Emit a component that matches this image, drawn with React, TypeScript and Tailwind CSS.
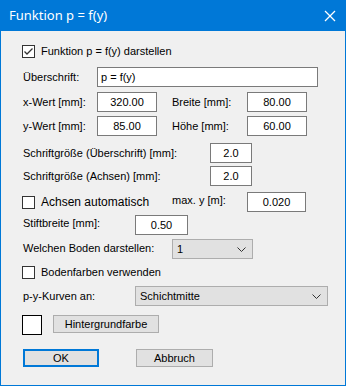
import React from 'react'

const font = { fontFamily: '"Liberation Sans", Arial, sans-serif' }

const Box: React.FC<{ checked?: boolean }> = ({ checked }) => (
  <div className="w-[13px] h-[13px] border border-[#333333] bg-white flex items-center justify-center shrink-0">
    {checked && (
      <svg width="11" height="11" viewBox="0 0 11 11">
        <polyline points="1.5,5.5 4,8 9.5,2.5" fill="none" stroke="#333333" strokeWidth="1.3" />
      </svg>
    )}
  </div>
)

const Field: React.FC<{ value: string; w: string; left?: boolean }> = ({ value, w, left }) => (
  <div className={`${w} h-[20px] border border-[#7a7a7a] bg-white flex items-center ${left ? 'pl-[3px]' : 'justify-center'}`}>
    {value}
  </div>
)

const Combo: React.FC<{ value: string; w: string }> = ({ value, w }) => (
  <div className={`${w} h-[20px] border border-[#adadad] bg-[#e1e1e1] flex items-center justify-between pl-[4px] pr-[6px]`}>
    <span>{value}</span>
    <svg width="9" height="5" viewBox="0 0 9 5">
      <polyline points="0.5,0.5 4.5,4.5 8.5,0.5" fill="none" stroke="#333333" strokeWidth="1" />
    </svg>
  </div>
)

export default function App() {
  return (
    <div className="w-[346px] h-[386px] bg-[#f0f0f0] border border-t-0 border-[#0078d7] flex flex-col text-[11px] text-black" style={font}>
      {/* title bar */}
      <div className="h-[31px] bg-[#0078d7] flex items-center justify-between pl-[9px] pr-[9px] text-white text-[13px] -mx-px" style={{ fontFamily: '"Noto Sans", "Open Sans", sans-serif' }}>
        <span>Funktion p = f(y)</span>
        <svg width="12" height="12" viewBox="0 0 12 12" className="mr-[1px]">
          <line x1="1" y1="1" x2="11" y2="11" stroke="white" strokeWidth="1.2" />
          <line x1="11" y1="1" x2="1" y2="11" stroke="white" strokeWidth="1.2" />
        </svg>
      </div>

      <div className="flex flex-col pl-[21px]">
        <div className="mt-[13px] h-[15px] flex items-center">
          <Box checked />
          <span className="ml-[6px]">Funktion p = f(y) darstellen</span>
        </div>

        <div className="mt-[8px] flex items-center">
          <span className="w-[75px] pl-[1px]">Überschrift:</span>
          <Field value="p = f(y)" w="w-[221px]" left />
        </div>

        <div className="mt-[5px] flex items-center">
          <span className="w-[75px] pl-[1px]">x-Wert [mm]:</span>
          <Field value="320.00" w="w-[60px]" />
          <span className="w-[75px] ml-[15px]">Breite [mm]:</span>
          <Field value="80.00" w="w-[60px]" />
        </div>

        <div className="mt-[4px] flex items-center">
          <span className="w-[75px] pl-[1px]">y-Wert [mm]:</span>
          <Field value="85.00" w="w-[60px]" />
          <span className="w-[75px] ml-[15px]">Höhe [mm]:</span>
          <Field value="60.00" w="w-[60px]" />
        </div>

        <div className="mt-[7px] flex items-center">
          <span className="w-[188px] pl-[1px]">Schriftgröße (Überschrift) [mm]:</span>
          <Field value="2.0" w="w-[42px]" />
        </div>

        <div className="mt-[3px] flex items-center">
          <span className="w-[188px] pl-[1px]">Schriftgröße (Achsen) [mm]:</span>
          <Field value="2.0" w="w-[42px]" />
        </div>

        <div className="mt-[6px] flex items-center">
          <div className="w-[150px] flex items-center">
            <Box />
            <span className="ml-[6px] text-[12px]">Achsen automatisch</span>
          </div>
          <span className="w-[75px] -mt-[3px]">max. y [m]:</span>
          <Field value="0.020" w="w-[59px]" />
        </div>

        <div className="mt-[3px] flex items-center">
          <span className="w-[113px] pl-[1px] -mt-[4px]">Stiftbreite [mm]:</span>
          <Field value="0.50" w="w-[53px]" />
        </div>

        <div className="mt-[4px] flex items-center">
          <span className="w-[150px] pl-[1px] -mt-[2px]">Welchen Boden darstellen:</span>
          <Combo value="1" w="w-[81px]" />
        </div>

        <div className="mt-[6px] h-[15px] flex items-center">
          <Box />
          <span className="ml-[6px]">Bodenfarben verwenden</span>
        </div>

        <div className="mt-[6px] flex items-center">
          <span className="w-[113px] pl-[1px]">p-y-Kurven an:</span>
          <Combo value="Schichtmitte" w="w-[193px]" />
        </div>

        <div className="mt-[9px] flex items-start">
          <div className="w-[20px] h-[20px] border border-black bg-white" />
          <div className="ml-[11px] w-[106px] h-[18px] border border-[#adadad] bg-[#e1e1e1] flex items-center justify-center">
            Hintergrundfarbe
          </div>
        </div>

        <div className="mt-[14px] flex items-center pl-[1px]">
          <div className="w-[76px] h-[18px] border-2 border-[#0078d7] bg-[#e1e1e1] flex items-center justify-center">
            OK
          </div>
          <div className="ml-[37px] w-[77px] h-[18px] border border-[#adadad] bg-[#e1e1e1] flex items-center justify-center">
            Abbruch
          </div>
        </div>
      </div>
    </div>
  )
}
